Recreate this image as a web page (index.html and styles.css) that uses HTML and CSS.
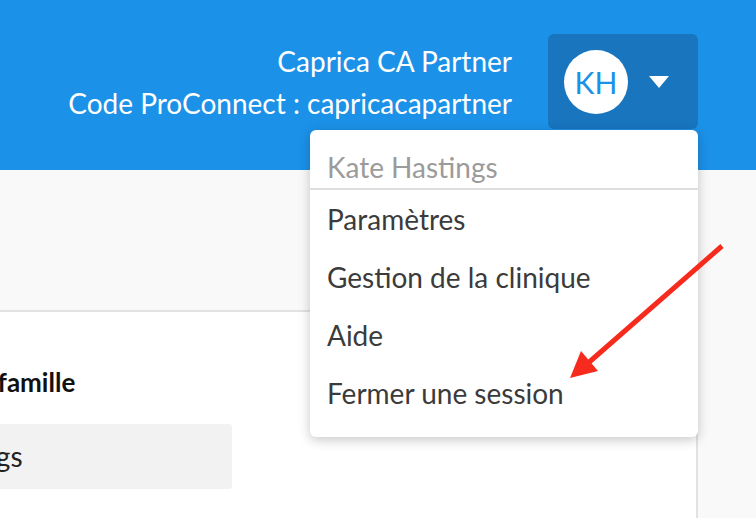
FILE: index.html
```html
<!DOCTYPE html>
<html lang="fr">
    <head>
        <meta charset="UTF-8" />
        <meta name="viewport" content="width=device-width, initial-scale=1.0" />
        <title>ProConnect - Compte</title>
        <link rel="stylesheet" href="styles.css">
    </head>
    <body>
        <div class="topbar">
            <div class="account-info">
                <div>Caprica CA Partner</div>
                <div>Code ProConnect : capricacapartner</div>
            </div>
            <div class="user-menu">
                <button class="user-btn">
                    <span class="avatar">KH</span>
                    <span class="caret"></span>
                </button>
                <ul class="dropdown">
                    <li class="dropdown-head">Kate Hastings</li>
                    <li>Paramètres</li>
                    <li>Gestion de la clinique</li>
                    <li>Aide</li>
                    <li>Fermer une session</li>
                </ul>
            </div>
        </div>

        <div class="main">
            <div class="card">
                <div class="field">
                    <label>Nom de famille</label>
                    <div class="input">Hastings</div>
                </div>
            </div>
        </div>

        <svg class="annotation" width="170" height="150" viewBox="0 0 170 150">
            <line x1="157" y1="6" x2="22" y2="124" stroke="#f62b1d" stroke-width="5" />
            <polygon points="5,138 16,111 33,131" fill="#f62b1d" />
        </svg>
    </body>
</html>
```

FILE: styles.css
```css
* {
    padding: 0;
    margin: 0;
    box-sizing: border-box;
}

html,
body {
    height: 100%;
    width: 100%;
}

body {
    font-family: Lato, "Open Sans", sans-serif;
    background-color: #f9f9f9;
    overflow: hidden;
    position: relative;
}

.topbar {
    height: 170px;
    background-color: #1b91e8;
    display: flex;
    justify-content: flex-end;
    align-items: flex-start;
    padding: 34px 58px 0 0;
    position: relative;
    z-index: 2;
}

.account-info {
    color: #fff;
    font-size: 28px;
    line-height: 42px;
    text-align: right;
    margin: 6px 36px 0 0;
}

.user-menu {
    position: relative;
}

.user-btn {
    width: 150px;
    height: 95px;
    border: none;
    border-radius: 6px;
    background-color: #1875be;
    display: flex;
    align-items: center;
    padding-left: 16px;
    gap: 21px;
}

.avatar {
    width: 64px;
    height: 64px;
    border-radius: 50%;
    background-color: #fff;
    color: #1b91e8;
    font-family: Lato, sans-serif;
    font-size: 30px;
    line-height: 64px;
    text-align: center;
}

.caret {
    width: 0;
    height: 0;
    border-left: 10.5px solid transparent;
    border-right: 10.5px solid transparent;
    border-top: 12px solid #fff;
}

.dropdown {
    position: absolute;
    top: 96px;
    right: 0;
    width: 388px;
    list-style: none;
    background-color: #fff;
    border-radius: 6px;
    box-shadow: 0 3px 12px rgba(0, 0, 0, 0.22);
    padding-bottom: 15px;
    font-size: 28px;
    color: #3b3b3b;
}

.dropdown li {
    line-height: 58px;
    padding: 0 17px;
}

.dropdown .dropdown-head {
    color: #9b9b9b;
    line-height: 40px;
    padding: 17px 17px 1px;
    border-bottom: 2px solid #dedede;
}

.main {
    padding-top: 140px;
}

.card {
    width: 698px;
    height: 208px;
    background-color: #fff;
    border-top: 2px solid #e2e2e2;
    border-right: 2px solid #e2e2e2;
    padding-top: 50px;
}

.field {
    margin-left: -100px;
    width: 332px;
}

.field label {
    display: block;
    font-size: 26px;
    font-weight: 700;
    line-height: 40px;
    color: #111;
    margin-bottom: 22px;
}

.input {
    height: 65px;
    line-height: 65px;
    background-color: #f2f2f2;
    border-radius: 3px;
    padding-left: 16px;
    font-size: 28px;
    color: #222;
}

.annotation {
    position: absolute;
    left: 565px;
    top: 240px;
    z-index: 3;
    pointer-events: none;
}
```
